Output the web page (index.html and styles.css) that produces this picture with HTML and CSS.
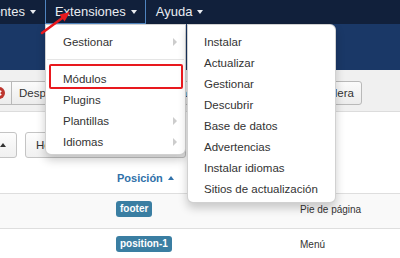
FILE: index.html
```html
<!DOCTYPE html>
<html lang="es">
<head>
<meta charset="utf-8">
<title>Extensiones</title>
<link rel="stylesheet" href="styles.css">
</head>
<body>
<div class="app">
  <nav class="navbar">
    <div class="nav-item">Componentes<span class="caret"></span></div>
    <div class="nav-item active">Extensiones<span class="caret"></span></div>
    <div class="nav-item">Ayuda<span class="caret"></span></div>
  </nav>
  <div class="subhead"></div>
  <div class="toolbar">
    <div class="tb-group">
      <button class="tbtn"><span class="ticon"><svg width="12" height="12" viewBox="0 0 12 12"><circle cx="6" cy="6" r="6" fill="#bd362f"/><path d="M3.8 3.8l4.4 4.4M8.2 3.8l-4.4 4.4" stroke="#fff" stroke-width="1.6"/></svg></span>Despublicar</button>
      <button class="tbtn"><span class="ticon"><svg width="12" height="12" viewBox="0 0 12 12"><rect x="2" y="5" width="8" height="6" fill="#555"/></svg></span>Desbloquear</button>
    </div>
    <div class="tb-group">
      <button class="tbtn"><span class="ticon"><svg width="12" height="12" viewBox="0 0 12 12"><rect x="2.5" y="3" width="7" height="8" fill="#555"/></svg></span>Papelera</button>
    </div>
  </div>
  <div class="content">
    <div class="filters">
      <button class="fbtn fbtn-icon"><span class="caret-up"></span></button>
      <button class="fbtn">Herramientas de búsqueda</button>
    </div>
    <div class="row thead">
      <div class="cell"></div>
      <div class="cell"><a class="sort-link">Posición<span class="caret-up small"></span></a></div>
      <div class="cell"></div>
    </div>
    <div class="row odd">
      <div class="cell"></div>
      <div class="cell"><span class="badge">footer</span></div>
      <div class="cell">Pie de página</div>
    </div>
    <div class="row">
      <div class="cell"></div>
      <div class="cell"><span class="badge">position-1</span></div>
      <div class="cell">Menú</div>
    </div>
  </div>

  <div class="dropdown dd-main">
    <div class="dd-item">Gestionar<span class="sub-arrow"></span></div>
    <div class="dd-divider"></div>
    <div class="dd-item">Módulos</div>
    <div class="dd-item">Plugins</div>
    <div class="dd-item">Plantillas<span class="sub-arrow"></span></div>
    <div class="dd-item">Idiomas<span class="sub-arrow"></span></div>
  </div>
  <div class="dropdown dd-sub">
    <div class="dd-item">Instalar</div>
    <div class="dd-item">Actualizar</div>
    <div class="dd-item">Gestionar</div>
    <div class="dd-item">Descubrir</div>
    <div class="dd-item">Base de datos</div>
    <div class="dd-item">Advertencias</div>
    <div class="dd-item">Instalar idiomas</div>
    <div class="dd-item">Sitios de actualización</div>
  </div>
  <div class="highlight"></div>
  <svg class="pointer" width="80" height="40" viewBox="0 0 80 40">
    <line x1="42" y1="33" x2="63" y2="17.5" stroke="#e8191e" stroke-width="2.6" stroke-linecap="round"/>
    <polygon points="70,12 59.4,14.6 64.6,21.4" fill="#e8191e"/>
  </svg>
</div>
</body>
</html>
```

FILE: styles.css
```css
html, body {
  margin: 0;
  padding: 0;
}
body {
  width: 400px;
  height: 258px;
  overflow: hidden;
  background: #fff;
  color: #333;
  font-family: "Liberation Sans", Arial, sans-serif;
}
.app {
  position: relative;
  width: 400px;
  height: 258px;
  overflow: hidden;
}

/* top navbar */
.navbar {
  display: flex;
  height: 24px;
  margin-left: -66px;
  background: #11203b;
}
.nav-item {
  display: flex;
  align-items: center;
  height: 23px;
  padding: 0 8px 0 9px;
  border: 1px solid transparent;
  border-top: 0;
  color: #e9ecf1;
  font-size: 13px;
}
.nav-item.active {
  border-color: #4f84bf;
}
.caret {
  width: 0;
  height: 0;
  margin-left: 5px;
  margin-top: 1px;
  border-top: 4px solid currentColor;
  border-left: 3px solid transparent;
  border-right: 3px solid transparent;
}

/* blue header */
.subhead {
  height: 46px;
  background: #1a3867;
}

/* toolbar */
.toolbar {
  display: flex;
  justify-content: space-between;
  align-items: flex-start;
  height: 30px;
  padding: 11px 38px 0 0;
  margin-left: -14px;
  background: #f0f0f0;
  border-bottom: 1px solid #dcdcdc;
}
.tb-group {
  display: flex;
  gap: 5px;
}
.tbtn {
  display: flex;
  align-items: center;
  height: 24px;
  box-sizing: border-box;
  padding: 0 7px 0 0;
  border: 1px solid #b9b9b9;
  border-radius: 3px;
  background: linear-gradient(#fbfbfb, #ececec);
  color: #333;
  font-family: inherit;
  font-size: 11.5px;
}
.ticon {
  display: flex;
  align-items: center;
  justify-content: center;
  width: 12px;
  height: 100%;
  padding: 0 6px;
  margin-right: 7px;
  border-right: 1px solid #b9b9b9;
}

/* content */
.filters {
  display: flex;
  gap: 8px;
  margin-left: -11px;
  padding-top: 20px;
}
.fbtn {
  display: flex;
  align-items: center;
  height: 26px;
  box-sizing: border-box;
  padding: 0 10px;
  border: 1px solid #c4c4c4;
  border-radius: 3px;
  background: linear-gradient(#fdfdfd, #f0f0f0);
  color: #333;
  font-family: inherit;
  font-size: 11.5px;
  white-space: nowrap;
}
.fbtn-icon {
  width: 28px;
  justify-content: flex-end;
  padding: 0 10px 0 0;
}
.caret-up {
  display: inline-block;
  width: 0;
  height: 0;
  border-bottom: 4px solid #333;
  border-left: 3px solid transparent;
  border-right: 3px solid transparent;
}
.caret-up.small {
  margin-left: 5px;
  border-bottom-color: #3071a9;
}

.row {
  display: grid;
  grid-template-columns: 116px 184px 1fr;
  box-sizing: border-box;
  height: 35px;
  padding-top: 7px;
  border-bottom: 1px solid #dedede;
  font-size: 10px;
  color: #333;
}
.row .cell {
  display: flex;
  align-items: center;
  height: 16px;
}
.row.thead {
  height: 36px;
  padding-top: 0;
  padding-bottom: 8px;
  align-items: end;
}
.row.thead .cell {
  height: 14px;
}
.row.odd {
  background: #f9f9f9;
}
.sort-link {
  display: flex;
  align-items: center;
  padding-left: 1px;
  color: #3071a9;
  font-weight: bold;
  font-size: 11px;
}
.badge {
  display: inline-block;
  height: 16px;
  line-height: 16px;
  padding: 0 4px;
  border-radius: 3px;
  background: #3a7ea2;
  color: #fff;
  font-weight: bold;
  font-size: 10px;
}

/* dropdowns */
.dropdown {
  position: absolute;
  top: 24px;
  background: #fff;
  border: 1px solid rgba(0, 0, 0, 0.18);
  box-shadow: 0 5px 10px rgba(0, 0, 0, 0.2);
  font-size: 11.5px;
  color: #333;
}
.dd-main {
  left: 45px;
  width: 139px;
  padding: 6px 0 2px;
  border-radius: 0 0 6px 6px;
}
.dd-sub {
  left: 187px;
  width: 147px;
  padding: 6px 0 3px;
  border-radius: 0 6px 6px 6px;
}
.dd-item {
  display: flex;
  align-items: center;
  justify-content: space-between;
  height: 21px;
  padding: 0 8px 0 17px;
  white-space: nowrap;
}
.dd-sub .dd-item {
  padding-left: 16px;
}
.dd-divider {
  height: 1px;
  margin: 7px 1px 8px;
  background: #e5e5e5;
}
.sub-arrow {
  width: 0;
  height: 0;
  border-left: 4px solid #cccccc;
  border-top: 4px solid transparent;
  border-bottom: 4px solid transparent;
}

/* annotations */
.highlight {
  position: absolute;
  left: 49px;
  top: 64px;
  width: 134px;
  height: 25px;
  box-sizing: border-box;
  border: 2px solid #e8191e;
  border-radius: 2px;
}
.pointer {
  position: absolute;
  left: 0;
  top: 0;
}
```
